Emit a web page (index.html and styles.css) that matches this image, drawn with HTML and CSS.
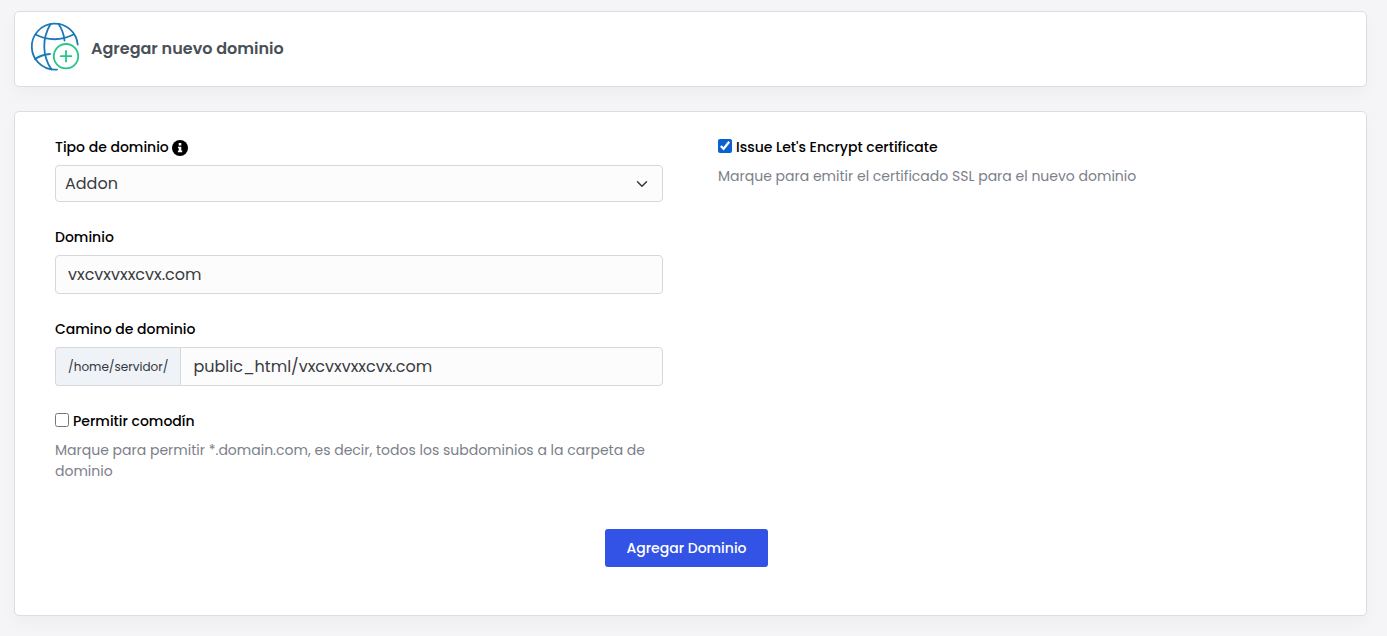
FILE: index.html
```html
<!DOCTYPE html>
<html lang="es">
<head>
<meta charset="utf-8">
<meta name="viewport" content="width=device-width, initial-scale=1">
<title>Agregar nuevo dominio</title>
<link rel="stylesheet" href="styles.css">
</head>
<body>
<main class="page">
  <header class="card page-header">
    <svg class="page-icon" viewBox="0 0 50 50" fill="none" stroke-width="1.8" stroke-linecap="round" aria-hidden="true">
      <g stroke="#1c78b8">
        <path d="M27 47.600H24.500A23 23 0 1 1 47.700 22.500"/>
        <path d="M5.500 12.500Q24.500 22 43.500 12.500"/>
        <path d="M5 37Q12 32.500 20 32"/>
        <path d="M20.500 2C12 16.500 12 33.500 21.500 47.500"/>
        <path d="M28.500 2Q33.500 9 34.500 18.500"/>
      </g>
      <g stroke="#25c68a">
        <circle cx="36" cy="34.200" r="12.200"/>
        <path d="M36 29v10.500M30.700 34.200h10.600"/>
      </g>
    </svg>
    <h1 class="page-title">Agregar nuevo dominio</h1>
  </header>

  <form class="card domain-form">
    <div class="columns">
      <div class="column">
        <div class="field">
          <div class="label-row">
            <label class="label" for="type">Tipo de dominio</label>
            <svg class="info" viewBox="0 0 16 16" aria-hidden="true">
              <circle cx="8" cy="8" r="8"/>
              <path fill="#fff" d="M6.700 3h2.600v2.500H6.700zM6 6.700h3.300v3.900h.9v1.700H5.900v-1.700h.9V8.300H6z"/>
            </svg>
          </div>
          <select class="control select" id="type"><option>Addon</option></select>
        </div>
        <div class="field">
          <label class="label" for="domain">Dominio</label>
          <input class="control" id="domain" type="text" value="vxcvxvxxcvx.com">
        </div>
        <div class="field">
          <label class="label" for="path">Camino de dominio</label>
          <div class="group">
            <span class="prefix">/home/servidor/</span>
            <input class="control group-control" id="path" type="text" value="public_html/vxcvxvxxcvx.com">
          </div>
        </div>
        <div class="field check-field">
          <label class="label check"><input class="box" type="checkbox">Permitir comodín</label>
          <p class="help">Marque para permitir *.domain.com, es decir, todos los subdominios a la carpeta de dominio</p>
        </div>
      </div>
      <div class="column">
        <div class="field check-field">
          <label class="label check"><input class="box" type="checkbox" checked>Issue Let's Encrypt certificate</label>
          <p class="help">Marque para emitir el certificado SSL para el nuevo dominio</p>
        </div>
      </div>
    </div>
    <div class="actions"><button class="submit" type="button">Agregar Dominio</button></div>
  </form>
</main>
</body>
</html>
```
FILE: styles.css
```css
* { box-sizing: border-box; }

body {
  margin: 0;
  background: #f5f5f8;
  color: #000;
  font-family: Poppins, Inter, sans-serif;
  font-size: 14px;
  line-height: 21px;
}

.page {
  display: flex;
  flex-direction: column;
  gap: 24px;
  padding: 11px 20px 20px 14px;
}

.card {
  background: #fff;
  border: 1px solid #dcdde1;
  border-radius: 5px;
  box-shadow: 0 8px 16px rgba(0, 0, 0, 0.03);
}

.page-header {
  display: flex;
  align-items: center;
  gap: 11px;
  padding: 10px 15px 14px;
}

.page-icon { width: 50px; height: 50px; }

.page-title {
  margin: 3px 0 0;
  color: #495057;
  font-size: 16px;
  font-weight: 600;
  line-height: 24px;
}

.domain-form { padding: 25px 40px 48px; }

.columns {
  display: grid;
  grid-template-columns: 1fr 1fr;
  gap: 55px;
}

.column, .field { display: flex; flex-direction: column; }
.column { gap: 25px; min-width: 0; }
.field { gap: 7px; }
.check-field { gap: 8px; }

.label { font-size: 14px; font-weight: 500; }

.label-row { display: flex; align-items: center; gap: 3px; }
.info { width: 16px; height: 16px; }

.control {
  width: 100%;
  height: 39px;
  padding: 0 12px;
  border: 1px solid #d5d8dc;
  border-radius: 4px;
  background: #fcfcfc;
  color: #383b3f;
  font: inherit;
  font-size: 16px;
}

.select {
  height: 37px;
  padding: 0 9px;
  appearance: none;
  background: #fcfcfc url("data:image/svg+xml,%3Csvg xmlns='http://www.w3.org/2000/svg' viewBox='0 0 16 16'%3E%3Cpath fill='none' stroke='%23343a40' stroke-width='2' stroke-linecap='round' stroke-linejoin='round' d='m2 5 6 6 6-6'/%3E%3C/svg%3E") no-repeat right 14px center / 12px 12px;
}

.group { display: flex; }

.prefix {
  display: flex;
  align-items: center;
  padding: 0 12px;
  border: 1px solid #d5d8dc;
  border-right: 0;
  border-radius: 4px 0 0 4px;
  background: #eff2f7;
  color: #33373c;
  font-size: 12px;
}

.group-control {
  flex: 1;
  min-width: 0;
  border-radius: 0 4px 4px 0;
}

.check { display: flex; align-items: flex-start; gap: 4px; }
.box { width: 14px; height: 14px; margin: 2px 0 0; accent-color: #0b61d0; }

.help { margin: 0; color: #7b8089; }

.actions {
  display: flex;
  justify-content: center;
  padding: 47px 8px 0 0;
}

.submit {
  height: 38px;
  padding: 0 21px;
  border: 0;
  border-radius: 3px;
  background: #3253e6;
  color: #fff;
  font: inherit;
  font-weight: 500;
}
```
